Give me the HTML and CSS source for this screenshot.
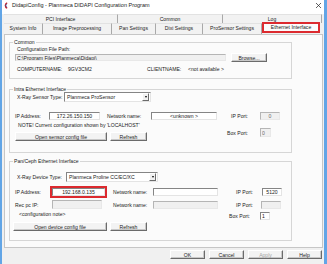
FILE: index.html
```html
<!DOCTYPE html>
<html>
<head>
<meta charset="utf-8">
<title>DidapiConfig</title>
<link rel="stylesheet" href="styles.css">
</head>
<body>
<div class="win">
  <div class="titlebar">
    <svg class="logo" viewBox="0 0 5 7"><path d="M4.2 0.8 A2.9 2.9 0 0 0 4.2 6.2" fill="none" stroke="#c8202a" stroke-width="1.4"/><path d="M3.6 2.2 A1.4 1.4 0 0 0 3.6 4.8" fill="none" stroke="#2a5caa" stroke-width="1"/></svg>
    <span class="title">DidapiConfig - Planmeca DIDAPI Configuration Program</span>
    <svg class="close" viewBox="0 0 5 5"><path d="M0 0 L5 5 M5 0 L0 5" stroke="#222" stroke-width="0.7"/></svg>
  </div>

  <div class="tabs">
    <div class="tabrow back">
      <div class="tab t-pci">PCI Interface</div>
      <div class="tab t-common">Common</div>
      <div class="tab t-log">Log</div>
    </div>
    <div class="tabrow front">
      <div class="tab t-sys">System Info</div>
      <div class="tab t-img">Image Preprocessing</div>
      <div class="tab t-pan">Pan Settings</div>
      <div class="tab t-dixi">Dixi Settings</div>
      <div class="tab t-pro">ProSensor Settings</div>
      <div class="tab t-eth sel">Ethernet Interface</div>
    </div>
  </div>

  <div class="panel">
    <!-- Common -->
    <fieldset class="grp g1">
      <legend>Common</legend>
      <div class="in">
        <div class="cfg-lbl">Configuration File Path:</div>
        <div class="row path-row">
          <input class="fld ro path" type="text" value="C:\Program Files\Planmeca\Didapi\">
          <button class="btn browse">Browse...</button>
        </div>
        <div class="row names">
          <span class="lbl w-cn">COMPUTERNAME:</span>
          <span class="lbl w-cv">9GV3CM2</span>
          <span class="lbl w-cl">CLIENTNAME:</span>
          <span class="lbl">&lt;not available &gt;</span>
        </div>
      </div>
    </fieldset>

    <!-- Intra -->
    <fieldset class="grp g2">
      <legend>Intra Ethernet Interface</legend>
      <div class="in">
        <div class="row h10">
          <span class="lbl ind2 w-sens">X-Ray Sensor Type:</span>
          <div class="combo cb-sens"><span>Planmeca ProSensor</span><i class="arr"></i></div>
        </div>
        <div class="row h8 ip2">
          <span class="lbl l-ip2">IP Address:</span>
          <input class="fld c f-ip2" type="text" value="172.26.150.150">
          <span class="lbl l-nn2">Network name:</span>
          <input class="fld c f-net2" type="text" value="&lt;unknown &gt;">
          <span class="lbl r l-port2">IP Port:</span>
          <input class="fld off c f-port2" type="text" value="0">
        </div>
        <div class="row top">
          <div class="col">
            <div class="note">NOTE! Current configuration shown by 'LOCALHOST'</div>
            <div class="row btns">
              <button class="btn b-open2">Open sensor config file</button>
              <button class="btn b-ref">Refresh</button>
            </div>
          </div>
          <div class="row h9 box2">
            <span class="lbl r l-port2">Box Port:</span>
            <input class="fld off f-box2" type="text" value="0">
          </div>
        </div>
      </div>
    </fieldset>

    <!-- Pan/Ceph -->
    <fieldset class="grp g3">
      <legend>Pan/Ceph Ethernet Interface</legend>
      <div class="in">
        <div class="row h10 dev">
          <span class="lbl ind2 w-dev">X-Ray Device Type:</span>
          <div class="combo cb-dev"><span>Planmeca Proline CC/EC/XC</span><i class="arr"></i></div>
        </div>
        <div class="row ip3">
          <span class="lbl l-ip3">IP Address:</span>
          <div class="hl"><input class="fld c f-ip3" type="text" value="192.168.0.135"></div>
          <span class="lbl l-nn3">Network name:</span>
          <input class="fld f-net3" type="text" value="">
          <span class="lbl r l-port3">IP Port:</span>
          <input class="fld c f-port3" type="text" value="5120">
        </div>
        <div class="row h9 rec">
          <span class="lbl l-rec">Rec pc IP:</span>
          <input class="fld off f-rec" type="text" value="">
          <span class="lbl l-nn3 l-nn3b">Network name:</span>
          <input class="fld off f-net3" type="text" value="">
          <span class="lbl r l-port3">IP Port:</span>
          <input class="fld off f-port3 f-port3b" type="text" value="">
        </div>
        <div class="row top">
          <div class="col">
            <div class="note n3">&lt;configuration note&gt;</div>
            <div class="row btns b3">
              <button class="btn b-open3">Open device config file</button>
              <button class="btn b-ref">Refresh</button>
            </div>
          </div>
          <div class="row h8 box3">
            <span class="lbl r l-box3">Box Port:</span>
            <input class="fld f-box3" type="text" value="1">
          </div>
        </div>
      </div>
    </fieldset>
  </div>

  <div class="footer">
    <button class="btn fb">OK</button>
    <button class="btn fb">Cancel</button>
    <button class="btn fb dis">Apply</button>
    <button class="btn fb">Help</button>
  </div>
</div>
</body>
</html>
```

FILE: styles.css
```css
* {
  box-sizing: border-box;
}
body {
  margin: 0;
  width: 327px;
  height: 264px;
  overflow: hidden;
  background: #f0f0f0;
  font-family: "Liberation Sans", Arial, sans-serif;
  font-size: 5.1px;
  color: #1a1a1a;
}
.win {
  height: 264px;
  border-left: 2px solid #62a5e6;
  border-right: 3px solid #62a5e6;
  display: flex;
  flex-direction: column;
}

/* title bar */
.titlebar {
  height: 14px;
  flex: none;
  background: #fff;
  display: flex;
  align-items: flex-start;
  padding: 2px 0 0 1px;
}
.logo {
  width: 5px;
  height: 7px;
  margin-right: 4px;
}
.title {
  flex: 1;
  font-size: 5.5px;
  line-height: 7px;
  color: #222;
}
.close {
  width: 5px;
  height: 5px;
  margin: 1px 3px 0 0;
}

/* tabs */
.tabs {
  flex: none;
  margin-left: 2px;
  width: 319px;
}
.tabrow {
  display: flex;
}
.back {
  height: 9px;
}
.front {
  height: 11px;
}
.tab {
  text-align: center;
  white-space: nowrap;
  border-top: 1px solid #e2e2e2;
  border-right: 1px solid #a9a9a9;
  background: #f2f2f2;
}
.back .tab {
  line-height: 8px;
}
.front .tab {
  line-height: 9px;
}
.tab.sel {
  height: 11px;
  margin-top: -1px;
  background: #fbfbfb;
  border: 2px solid #dc2a2f;
  line-height: 7px;
}
.t-pci { width: 114px; }
.t-common { width: 105px; }
.t-log { width: 99px; }
.t-sys { width: 39px; }
.t-img { width: 69px; }
.t-pan { width: 44px; }
.t-dixi { width: 47px; }
.t-pro { width: 59px; }
.t-eth { width: 58px; }

/* panel */
.panel {
  flex: none;
  margin-left: 2px;
  width: 319px;
  height: 214px;
  border: 1px solid #c6c6c6;
  background: #fbfbfb;
  padding: 4px 0 0 4px;
}
.grp {
  margin: 0;
  padding: 0;
  min-width: 0;
  width: 283px;
  border: 1px solid #d6d6d6;
}
.grp legend {
  padding: 0 1px;
  margin-left: 3px;
  line-height: 6px;
}
.g1 {
  height: 40px;
}
.g2 {
  height: 67px;
  margin-top: 7px;
}
.g3 {
  height: 83px;
  margin-top: 5px;
}
.in {
  padding-left: 5px;
}
.row {
  display: flex;
  align-items: center;
}
.row.top {
  align-items: flex-start;
}
.col {
  width: 203px;
  flex: none;
}
.lbl {
  flex: none;
  white-space: nowrap;
}
.lbl.r {
  text-align: right;
}
.ind2 {
  padding-left: 2px;
}
.h8 {
  height: 8px;
}
.h9 {
  height: 9px;
}
.h10 {
  height: 10px;
}

/* controls */
.fld {
  flex: none;
  height: 8px;
  margin: 0;
  padding: 0 1px;
  font: inherit;
  color: #1a1a1a;
  background: #fff;
  border: 1px solid;
  border-color: #858585 #e4e4e4 #e4e4e4 #858585;
  outline: none;
}
.fld.c {
  text-align: center;
}
.fld.off,
.fld.ro {
  background: #f0f0f0;
  border-color: #b5b5b5 #e8e8e8 #e8e8e8 #b5b5b5;
  color: #6d6d6d;
}
.fld.ro {
  color: #1a1a1a;
}
.btn {
  flex: none;
  height: 9px;
  margin: 0;
  padding: 0;
  font: inherit;
  color: #1a1a1a;
  background: #f3f3f3;
  border: 1px solid;
  border-color: #fff #6b6b6b #6b6b6b #fff;
  box-shadow: inset -1px -1px 0 #c8c8c8;
}
.combo {
  flex: none;
  height: 10px;
  display: flex;
  background: #fff;
  border: 1px solid;
  border-color: #858585 #e4e4e4 #e4e4e4 #858585;
}
.combo span {
  flex: 1;
  padding-left: 2px;
  line-height: 8px;
  white-space: nowrap;
}
.arr {
  width: 7px;
  margin: 0 1px 0 0;
  background: #f0f0f0;
  border: 1px solid;
  border-color: #fff #6b6b6b #6b6b6b #fff;
  display: flex;
  align-items: center;
  justify-content: center;
}
.arr::after {
  content: "";
  border-left: 1.5px solid transparent;
  border-right: 1.5px solid transparent;
  border-top: 2px solid #000;
}
.b-ref {
  width: 37px;
  margin-left: 3px;
}

/* group 1 */
.cfg-lbl {
  margin: 1px 0 0 2px;
  line-height: 6px;
}
.path-row {
  margin-top: 1px;
  height: 9px;
  align-items: flex-start;
}
.path {
  width: 211px;
  height: 7px;
  margin-top: 1px;
}
.browse {
  width: 36px;
  margin-left: 5px;
}
.names {
  margin: 4px 0 0 2px;
  line-height: 6px;
}
.w-cn { width: 51px; }
.w-cv { width: 79px; }
.w-cl { width: 41px; }

/* group 2 */
.w-sens { width: 49px; }
.cb-sens { width: 87px; }
.ip2 {
  margin-top: 10px;
}
.l-ip2 { width: 34px; }
.f-ip2 { width: 51px; }
.l-nn2 {
  width: 44px;
  margin-left: 7px;
}
.f-net2 { width: 66px; }
.l-port2 {
  width: 30px;
  margin-left: 1px;
}
.f-port2 {
  width: 20px;
  margin-left: 12px;
}
.note {
  margin: 2px 0 0 3px;
  line-height: 6px;
}
.btns {
  margin-top: 4px;
}
.b-open2 { width: 92px; }
.box2 {
  margin-top: 8px;
}
.box2 .l-port2 {
  margin-left: 0;
}
.f-box2 {
  width: 11px;
  height: 9px;
  margin-left: 12px;
}

/* group 3 */
.dev {
  margin-top: 8px;
}
.w-dev { width: 51px; }
.cb-dev { width: 92px; }
.ip3 {
  margin-top: 4px;
  height: 12px;
}
.l-ip3 { width: 35px; }
.hl {
  flex: none;
  width: 57px;
  height: 12px;
  border: 2px solid #dc2a2f;
}
.f-ip3 { width: 53px; }
.l-nn3 {
  width: 40px;
  margin-left: 6px;
}
.l-nn3b {
  margin-left: 11px;
}
.f-net3 { width: 65px; }
.l-port3 { width: 35px; }
.f-port3 {
  width: 20px;
  margin-left: 9px;
}
.f-port3b {
  margin-left: 8px;
}
.rec {
  margin-top: 2px;
}
.l-rec { width: 37px; }
.f-rec {
  width: 50px;
  height: 9px;
}
.n3 {
  margin-left: 4px;
}
.b3 {
  margin-top: 5px;
}
.b-open3 {
  width: 94px;
  margin-left: -2px;
}
.box3 {
  margin-top: 3px;
}
.l-box3 { width: 32px; }
.f-box3 {
  width: 10px;
  margin-left: 10px;
}

/* footer */
.footer {
  flex: 1;
  display: flex;
  justify-content: flex-end;
  align-items: flex-start;
  gap: 4px;
  padding: 2px 2px 0 0;
}
.fb {
  width: 35px;
}
.fb.dis {
  color: #a3a3a3;
}
```
